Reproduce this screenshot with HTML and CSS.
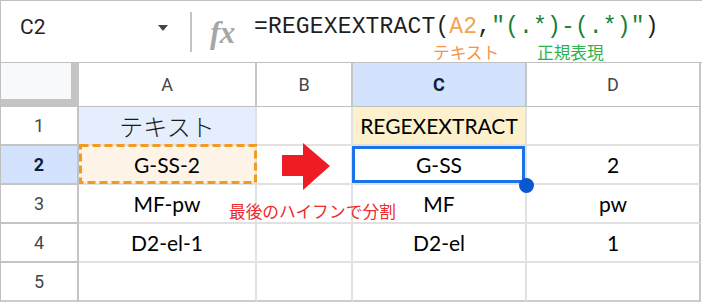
FILE: index.html
```html
<!DOCTYPE html>
<html lang="ja">
<head>
<meta charset="utf-8">
<title>REGEXEXTRACT</title>
<link rel="stylesheet" href="styles.css">
</head>
<body>
<div class="sheet">
  <div class="formula-bar">
    <div class="name-box"><span class="name">C2</span><span class="caret"></span></div>
    <div class="sep"></div>
    <div class="fx">fx</div>
    <div class="formula"><span class="fn">=REGEXEXTRACT(</span><span class="ref">A2</span><span class="fn">,</span><span class="str">"(.*)-(.*)"</span><span class="fn">)</span></div>
    <span class="note note-text">テキスト</span>
    <span class="note note-regex">正規表現</span>
  </div>
  <div class="grid">
    <div class="corner"></div>
    <div class="col-h">A</div>
    <div class="col-h">B</div>
    <div class="col-h active">C</div>
    <div class="col-h">D</div>

    <div class="row-h">1</div>
    <div class="cell a1">テキスト</div>
    <div class="cell"></div>
    <div class="cell c1">REGEXEXTRACT</div>
    <div class="cell last"></div>

    <div class="row-h active">2</div>
    <div class="cell a2">G-SS-2<svg class="marquee" width="178" height="40" viewBox="0 0 178 40"><rect x="1.5" y="1.5" width="175" height="37" fill="none" stroke="#f39b21" stroke-width="3" stroke-dasharray="8 4"/></svg></div>
    <div class="cell"></div>
    <div class="cell c2">G-SS<span class="handle"></span></div>
    <div class="cell last">2</div>

    <div class="row-h">3</div>
    <div class="cell">MF-pw</div>
    <div class="cell"></div>
    <div class="cell">MF</div>
    <div class="cell last">pw</div>

    <div class="row-h">4</div>
    <div class="cell">D2-el-1</div>
    <div class="cell"></div>
    <div class="cell">D2-el</div>
    <div class="cell last">1</div>

    <div class="row-h bottom">5</div>
    <div class="cell bottom"></div>
    <div class="cell bottom"></div>
    <div class="cell bottom"></div>
    <div class="cell last bottom"></div>

    <svg class="arrow" width="50" height="50" viewBox="0 0 50 50"><polygon points="1,13 22,13 22,1 49,24 22,48 22,34 1,34" fill="#ee1c25"/></svg>
    <span class="split-note">最後のハイフンで分割</span>
  </div>
</div>
</body>
</html>
```

FILE: styles.css
```css
html, body {
  margin: 0;
  padding: 0;
  background: #ffffff;
}

body {
  width: 703px;
  height: 304px;
  overflow: hidden;
}

.sheet {
  width: 701px;
  border-left: 1px solid #c0c0c0;
  border-top: 1px solid #c0c0c0;
}

/* ---------- formula bar ---------- */
.formula-bar {
  position: relative;
  height: 62px;
  box-sizing: border-box;
  border-bottom: 1px solid #c0c0c0;
  display: flex;
  align-items: center;
  padding-bottom: 9px;
}

.name-box {
  width: 189px;
  box-sizing: border-box;
  padding-left: 19px;
  padding-right: 22px;
  display: flex;
  align-items: center;
  justify-content: space-between;
}

.name {
  font-family: Roboto, "Liberation Sans", sans-serif;
  font-size: 21px;
  color: #1f1f1f;
}

.caret {
  width: 0;
  height: 0;
  border-left: 5.5px solid transparent;
  border-right: 5.5px solid transparent;
  border-top: 6px solid #444746;
  margin-top: 1px;
}

.sep {
  align-self: flex-start;
  margin-top: 11px;
  width: 2px;
  height: 40px;
  background: #c4c4c4;
}

.fx {
  margin-left: 18px;
  margin-top: 12px;
  width: 28px;
  font-family: "Liberation Serif", serif;
  font-style: italic;
  font-weight: bold;
  font-size: 31px;
  line-height: 30px;
  color: #a6a6a6;
  letter-spacing: -0.5px;
}

.formula {
  margin-left: 16px;
  font-family: "Liberation Mono", monospace;
  font-size: 23px;
  line-height: 30px;
  letter-spacing: 0.15px;
  white-space: nowrap;
}

.fn { color: #1f1f1f; }
.ref { color: #f4a352; }
.str { color: #1a7f37; }

.note {
  position: absolute;
  top: 39px;
  font-family: "Noto Sans CJK JP", sans-serif;
  font-size: 16.7px;
  line-height: 24px;
}

.note-text {
  left: 432px;
  color: #f5944a;
}

.note-regex {
  left: 536px;
  color: #2fb24c;
}

/* ---------- grid ---------- */
.grid {
  position: relative;
  display: grid;
  grid-template-columns: 78px 178px 96px 174px 174px;
  grid-template-rows: 44px repeat(5, 39px);
}

.grid > div {
  box-sizing: border-box;
  display: flex;
  align-items: center;
  justify-content: center;
}

.corner {
  background: #f8f9fa;
  border-right: 8px solid #c4c4c4;
  border-bottom: 8px solid #c4c4c4;
}

.col-h {
  border-right: 2px solid #c6c6c6;
  border-bottom: 1px solid #c0c0c0;
  font-family: Roboto, "Liberation Sans", sans-serif;
  font-size: 18px;
  color: #444746;
}

.col-h.active {
  background: #d3e3fd;
  color: #0b1d40;
  font-weight: bold;
}

.row-h {
  border-right: 2px solid #c4c4c4;
  border-bottom: 2px solid #c4c4c4;
  font-family: Roboto, "Liberation Sans", sans-serif;
  font-size: 18px;
  color: #444746;
}

.row-h.active {
  background: #d3e3fd;
  color: #0b1d40;
  font-weight: bold;
}

.cell {
  position: relative;
  border-right: 2px solid #e1e1e1;
  border-bottom: 2px solid #e1e1e1;
  font-family: Lato, "Open Sans", sans-serif;
  font-size: 21px;
  color: #000000;
}

.cell.last {
  border-right-color: #c6c6c6;
}

.grid > .bottom {
  border-bottom-color: #cccccc;
}

.a1 {
  background: #e4eefc;
  font-family: "Noto Sans CJK JP", sans-serif;
  font-size: 24px;
  font-weight: 300;
  color: #1a1a1a;
}

.c1 {
  background: #fdf0cd;
}

.a2 {
  background: #fdf3e6;
}

.marquee {
  position: absolute;
  left: 0;
  top: -2px;
}

.c2::after {
  content: "";
  position: absolute;
  left: -1px;
  top: 0;
  right: 0;
  bottom: 0;
  border: 3px solid #1a73e8;
}

.handle {
  position: absolute;
  left: 166px;
  top: 32px;
  width: 15px;
  height: 15px;
  border-radius: 50%;
  background: #0b57d0;
  z-index: 2;
}

.arrow {
  position: absolute;
  left: 280px;
  top: 79px;
}

.split-note {
  position: absolute;
  left: 228px;
  top: 136px;
  font-family: "Noto Sans CJK JP", sans-serif;
  font-size: 16.7px;
  line-height: 24px;
  color: #ee2a2a;
  white-space: nowrap;
}
```
